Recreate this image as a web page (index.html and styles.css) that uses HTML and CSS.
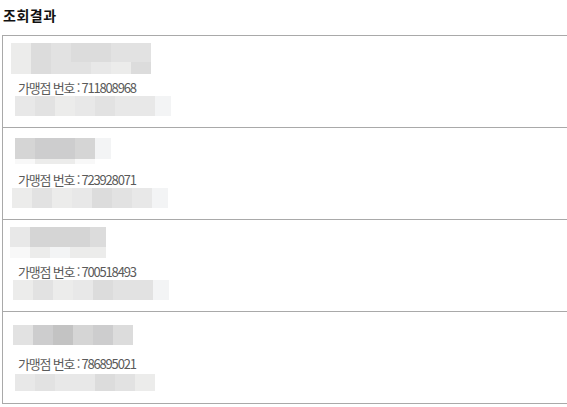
FILE: index.html
```html
<!DOCTYPE html>
<html lang="ko">
<head>
  <meta charset="UTF-8">
  <title>조회결과</title>
  <meta name="viewport" content="width=device-width, initial-scale=1">
  <link rel="stylesheet" href="styles.css">
</head>
<body>
<h2 class="title">조회결과</h2>
<div class="result-list">
  <div class="item">
    <div class="name">
      <div class="blur cols-7 rows-2 off-8">
        <span class="c2"></span><span class="c5"></span><span class="c4"></span><span class="c5"></span><span class="c5"></span><span class="c4"></span><span class="c4"></span>
        <span class="c2"></span><span class="c5"></span><span class="c4"></span><span class="c4"></span><span class="c3"></span><span class="c2"></span><span class="c5"></span>
      </div>
    </div>
    <div class="label">가맹점 번호 : 711808968</div>
    <div class="addr">
      <div class="blur cols-8 off-12">
        <span class="c3"></span><span class="c4"></span><span class="c2"></span><span class="c3"></span><span class="c4"></span><span class="c3"></span><span class="c3"></span><span class="c1"></span>
      </div>
    </div>
  </div>
  <div class="item">
    <div class="name">
      <div class="blur cols-5 rows-2b off-12">
        <span class="c6"></span><span class="c7"></span><span class="c7"></span><span class="c6"></span><span class="c1"></span>
        <span class="c0"></span><span class="c2"></span><span class="c2"></span><span class="c0"></span><span class="c9"></span>
      </div>
    </div>
    <div class="label">가맹점 번호 : 723928071</div>
    <div class="addr">
      <div class="blur cols-8 off-9">
        <span class="c2"></span><span class="c4"></span><span class="c2"></span><span class="c3"></span><span class="c5"></span><span class="c4"></span><span class="c3"></span><span class="c1"></span>
      </div>
    </div>
  </div>
  <div class="item">
    <div class="name">
      <div class="blur cols-5 rows-2c off-7">
        <span class="c3"></span><span class="c6"></span><span class="c6"></span><span class="c6"></span><span class="c5"></span>
        <span class="c0"></span><span class="c2"></span><span class="c1"></span><span class="c2"></span><span class="c2"></span>
      </div>
    </div>
    <div class="label">가맹점 번호 : 700518493</div>
    <div class="addr">
      <div class="blur cols-8 off-10">
        <span class="c2"></span><span class="c4"></span><span class="c2"></span><span class="c3"></span><span class="c5"></span><span class="c4"></span><span class="c4"></span><span class="c1"></span>
      </div>
    </div>
  </div>
  <div class="item">
    <div class="name">
      <div class="blur cols-6 off-10">
        <span class="c4"></span><span class="c7"></span><span class="c8"></span><span class="c6"></span><span class="c7"></span><span class="c5"></span>
      </div>
    </div>
    <div class="label">가맹점 번호 : 786895021</div>
    <div class="addr">
      <div class="blur cols-7 short off-12">
        <span class="c3"></span><span class="c4"></span><span class="c3"></span><span class="c3"></span><span class="c5"></span><span class="c4"></span><span class="c2"></span>
      </div>
    </div>
  </div>
</div>
</body>
</html>
```
FILE: styles.css
```css
* { box-sizing: border-box; }
body {
  margin: 0;
  padding: 0 0 0 2px;
  background: #fff;
  color: #555;
  font-family: 'Noto Sans CJK KR', 'Noto Sans', sans-serif;
  overflow: hidden;
}
.title {
  margin: 0 0 10px;
  padding: 5px 0 0 1px;
  font-size: 14px;
  line-height: 20px;
  font-weight: bold;
  letter-spacing: 0.5px;
  color: #111;
}
.result-list {
  border-top: 1px solid #a9a9a9;
  border-left: 1px solid #a9a9a9;
}
.item {
  height: 92px;
  border-bottom: 1px solid #a9a9a9;
}
.name {
  height: 45px;
  display: flex;
  align-items: center;
}
.label {
  padding-left: 15px;
  font-size: 13px;
  line-height: 13px;
  letter-spacing: -1.2px;
  color: #5a5a5a;
}
.addr {
  height: 24px;
  display: flex;
  align-items: center;
}
/* blurred placeholder tiles */
.blur {
  display: grid;
  grid-auto-rows: 20px;
}
.blur.short { grid-auto-rows: 17px; }
.blur.rows-2 { grid-template-rows: 19px 12px; }
.blur.rows-2b { grid-template-rows: 21px 5px; }
.blur.rows-2c { grid-template-rows: 20px 11px; }
.cols-5 { grid-template-columns: repeat(4, 20px) 16px; }
.cols-6 { grid-template-columns: repeat(6, 20px); }
.cols-7 { grid-template-columns: repeat(7, 20px); }
.cols-8 { grid-template-columns: repeat(7, 20px) 16px; }
.off-7 { margin-left: 7px; }
.off-8 { margin-left: 8px; }
.off-9 { margin-left: 9px; }
.off-10 { margin-left: 10px; }
.off-12 { margin-left: 12px; }
.c9 { background: #fff; }
.c0 { background: #f8f8f8; }
.c1 { background: #f3f4f5; }
.c2 { background: #ececeb; }
.c3 { background: #e8e8e8; }
.c4 { background: #e2e2e2; }
.c5 { background: #dcdcdc; }
.c6 { background: #d5d5d5; }
.c7 { background: #cdcdce; }
.c8 { background: #c3c3c3; }
```
